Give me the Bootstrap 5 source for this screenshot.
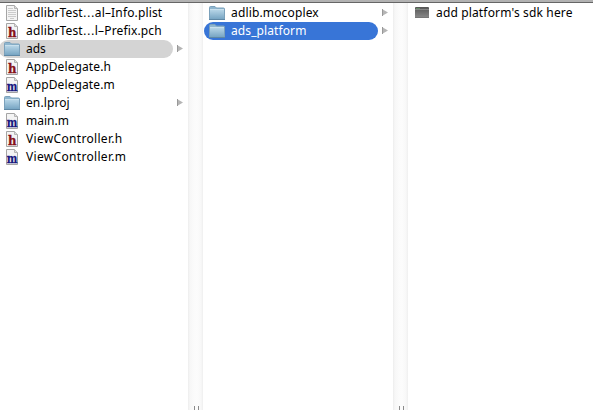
<!DOCTYPE html>
<html lang="en">
<head>
<meta charset="utf-8">
<title>Column browser</title>
<link href="https://cdn.jsdelivr.net/npm/bootstrap@5.3.0/dist/css/bootstrap.min.css" rel="stylesheet">
<style>
body{height:410px;overflow:hidden;background:#fff;color:#000;font:12px/18px "Noto Sans","Open Sans",sans-serif}
.topbar{height:3px;background:#b2b2b2;border-bottom:1px solid #666}
.pane{padding-top:1px}
.pane-a{width:188px}
.pane-b{width:190px}
.gutter{width:15px;background:linear-gradient(90deg,#ededed 0,#f7f7f7 2px,#fbfbfb 6px,#fcfcfc 9px,#f8f8f8 13px,#efefef)}
.grip{width:5px;height:4px;border:solid #8b8b8b;border-width:0 1px;margin-left:1px}
.entry{height:18px}
.entry-label{height:18px;border-radius:9px;width:174px;margin-left:-1px;padding-left:5px;white-space:nowrap}
.pane-b .entry-label,.pane-c .entry-label{margin-left:1px}
.picked{background:#d4d4d4}
.active-pick{background:#3875d7;color:#fff}
.entry svg{flex:none}
.pic{width:16px;height:16px;margin-right:6px}
.arrow{width:6px;height:7px;margin:-2px 0 0 4px}
.dots{font-family:"DejaVu Sans",sans-serif;line-height:1;letter-spacing:0}
.track-1{letter-spacing:.1px}
.track-2{letter-spacing:.15px}
.track-3{letter-spacing:.32px}
.glyph{font:bold 12px "DejaVu Serif",serif;stroke-width:.3px}
</style>
<script src="https://cdn.jsdelivr.net/npm/bootstrap@5.3.0/dist/js/bootstrap.bundle.min.js"></script>
</head>
<body class="d-flex flex-column">
<svg width="0" height="0" class="position-absolute">
<defs>
<linearGradient id="blue" x2="0" y2="1"><stop stop-color="#b5d4e6"/><stop offset="1" stop-color="#77a5c3"/></linearGradient>
<linearGradient id="dark" x2="0" y2="1"><stop stop-color="#555"/><stop offset="1" stop-color="#8b8b8b"/></linearGradient>
<symbol id="folder" viewBox="0 0 16 16"><path d="M.5 14.5V2.5Q.5 1.5 1.5 1.5H6L7.5 3H14.5Q15.5 3 15.5 4V14.5Z" fill="#8fb6cf" stroke="#7ba1bb"/><path d="M1 5H15V14H1Z" fill="url(#blue)"/><path d="M1 4.5H15" stroke="#c9e0ed"/><path d="M0 14.5H16" stroke="#5f88a5"/></symbol>
<symbol id="sheet" viewBox="0 0 16 16"><path d="M2.5 .5H10.5L13.5 3.5V15.5H2.5Z" fill="#f4f4f4" stroke="#a5a5a5"/><path d="M10.5 .5V3.5H13.5" fill="#ddd" stroke="#b5b5b5"/></symbol>
<symbol id="plist" viewBox="0 0 16 16"><use href="#sheet"/><path d="M4 3.5H9M4 5.5H12M4 7.5H12M4 9.5H12M4 11.5H12M6 13.5H10" stroke="#cbcbcb"/></symbol>
<symbol id="header" viewBox="0 0 16 16"><use href="#sheet"/><text class="glyph" x="4" y="14" textLength="8.5" lengthAdjust="spacingAndGlyphs" fill="#861118" stroke="#861118">h</text></symbol>
<symbol id="module" viewBox="0 0 16 16"><use href="#sheet"/><text class="glyph" x="2.7" y="14" textLength="10.6" lengthAdjust="spacingAndGlyphs" fill="#17177d" stroke="#17177d">m</text></symbol>
<symbol id="darkfolder" viewBox="0 0 16 16"><path d="M1 3Q1 2 2 2H14Q15 2 15 3V13H1Z" fill="url(#dark)"/><path d="M1 4.5H15" stroke="#858585"/><path d="M2 3.5H6" stroke="#668a67"/><path d="M1 12.5H15" stroke="#777"/></symbol>
<symbol id="tri" viewBox="0 0 6 7"><path d="M0 0L6 3.5L0 7Z" fill="#b5b5b5"/><path d="M.5 0V7" stroke="#999"/></symbol>
</defs></svg>
<header class="topbar flex-shrink-0"></header>
<main class="d-flex flex-grow-1">
<section class="pane pane-a">
<div class="entry d-flex"><div class="entry-label d-flex align-items-center"><svg class="pic"><use href="#plist"/></svg><span class="track-2">adlibrTest<span class="dots">…</span>al–Info.plist</span></div></div>
<div class="entry d-flex"><div class="entry-label d-flex align-items-center"><svg class="pic"><use href="#header"/></svg><span class="track-2">adlibrTest<span class="dots">…</span>l–Prefix.pch</span></div></div>
<div class="entry d-flex align-items-center"><div class="entry-label picked d-flex align-items-center"><svg class="pic"><use href="#folder"/></svg><span>ads</span></div><svg class="arrow"><use href="#tri"/></svg></div>
<div class="entry d-flex"><div class="entry-label d-flex align-items-center"><svg class="pic"><use href="#header"/></svg><span class="track-1">AppDelegate.h</span></div></div>
<div class="entry d-flex"><div class="entry-label d-flex align-items-center"><svg class="pic"><use href="#module"/></svg><span class="track-1">AppDelegate.m</span></div></div>
<div class="entry d-flex align-items-center"><div class="entry-label d-flex align-items-center"><svg class="pic"><use href="#folder"/></svg><span class="track-1">en.lproj</span></div><svg class="arrow"><use href="#tri"/></svg></div>
<div class="entry d-flex"><div class="entry-label d-flex align-items-center"><svg class="pic"><use href="#module"/></svg><span>main.m</span></div></div>
<div class="entry d-flex"><div class="entry-label d-flex align-items-center"><svg class="pic"><use href="#header"/></svg><span class="track-3">ViewController.h</span></div></div>
<div class="entry d-flex"><div class="entry-label d-flex align-items-center"><svg class="pic"><use href="#module"/></svg><span class="track-3">ViewController.m</span></div></div>
</section>
<div class="gutter d-flex flex-column justify-content-end align-items-center"><div class="grip"></div></div>
<section class="pane pane-b">
<div class="entry d-flex align-items-center"><div class="entry-label d-flex align-items-center"><svg class="pic"><use href="#folder"/></svg><span class="track-2">adlib.mocoplex</span></div><svg class="arrow"><use href="#tri"/></svg></div>
<div class="entry d-flex align-items-center"><div class="entry-label active-pick d-flex align-items-center"><svg class="pic"><use href="#folder"/></svg><span class="track-1">ads_platform</span></div><svg class="arrow"><use href="#tri"/></svg></div>
</section>
<div class="gutter d-flex flex-column justify-content-end align-items-center"><div class="grip"></div></div>
<section class="pane pane-c flex-grow-1">
<div class="entry d-flex"><div class="entry-label d-flex align-items-center"><svg class="pic"><use href="#darkfolder"/></svg><span class="track-2">add platform's sdk here</span></div></div>
</section>
</main>
</body>
</html>
